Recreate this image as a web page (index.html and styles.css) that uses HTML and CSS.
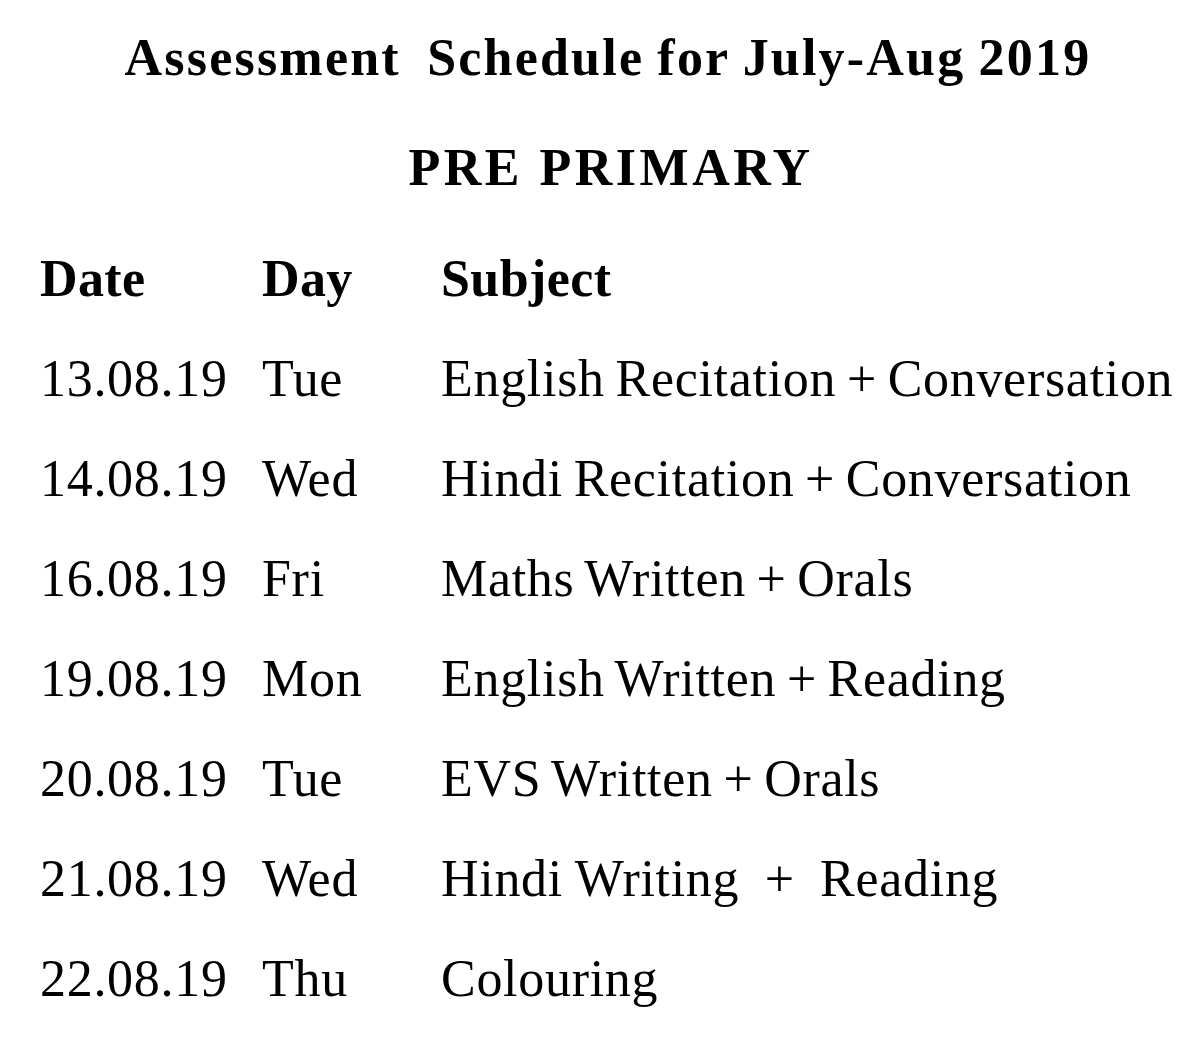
FILE: index.html
```html
<!DOCTYPE html>
<html lang="en">
<head>
<meta charset="utf-8">
<title>Assessment Schedule</title>
<link rel="stylesheet" href="styles.css">
</head>
<body>
<div class="page">
  <h1 class="title">Assessment&nbsp; Schedule for July-Aug 2019</h1>
  <h2 class="subtitle">PRE PRIMARY</h2>
  <div class="schedule">
    <div class="cell head">Date</div><div class="cell head">Day</div><div class="cell head">Subject</div>
    <div class="cell">13.08.19</div><div class="cell">Tue</div><div class="cell">English Recitation + Conversation</div>
    <div class="cell">14.08.19</div><div class="cell">Wed</div><div class="cell">Hindi Recitation + Conversation</div>
    <div class="cell">16.08.19</div><div class="cell">Fri</div><div class="cell">Maths Written + Orals</div>
    <div class="cell">19.08.19</div><div class="cell">Mon</div><div class="cell">English Written + Reading</div>
    <div class="cell">20.08.19</div><div class="cell">Tue</div><div class="cell">EVS Written + Orals</div>
    <div class="cell">21.08.19</div><div class="cell">Wed</div><div class="cell wide">Hindi Writing&nbsp; +&nbsp; Reading</div>
    <div class="cell">22.08.19</div><div class="cell">Thu</div><div class="cell">Colouring</div>
  </div>
</div>
</body>
</html>
```
FILE: styles.css
```css
html, body {
  margin: 0;
  padding: 0;
  background: #ffffff;
}
body {
  font-family: "Liberation Serif", "Times New Roman", serif;
  color: #000000;
}
.page {
  padding-top: 3px;
}
.title, .subtitle {
  margin: 0;
  text-align: center;
  font-weight: bold;
  font-size: 52px;
  line-height: 110px;
}
.title {
  padding-left: 16px;
  letter-spacing: 2.2px;
  word-spacing: -2px;
}
.subtitle {
  margin-bottom: 6px;
  padding-left: 22px;
  letter-spacing: 3.5px;
}
.schedule {
  display: grid;
  grid-template-columns: 222px 179px 1fr;
  padding-left: 40px;
  font-size: 52px;
  line-height: 100px;
  letter-spacing: 0.7px;
  word-spacing: -3px;
}
.cell {
  white-space: nowrap;
}
.wide {
  word-spacing: -1px;
}
.head {
  font-weight: bold;
  letter-spacing: 0.4px;
  word-spacing: 0;
}
```
